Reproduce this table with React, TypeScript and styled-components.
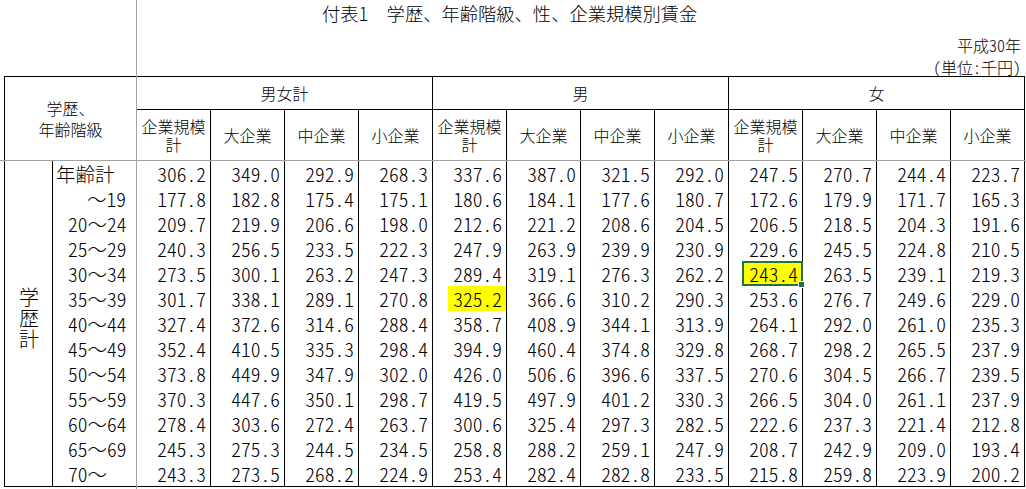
import React from "react";
import styled, { createGlobalStyle, css } from "styled-components";

const FONT = `"Noto Sans CJK JP", "Noto Sans", "DejaVu Sans", sans-serif`;

const GlobalStyle = createGlobalStyle`
  html, body { margin: 0; padding: 0; background: #fff; }
  body { font-family: ${FONT}; color: #000; }
`;

const Sheet = styled.div`
  position: relative;
  width: 1026px;
  height: 489px;
  overflow: hidden;
  background: #fff;
`;

const Heading = styled.header`
  height: 76px;
  display: flex;
  flex-direction: column;
`;

const Title = styled.h1`
  margin: 0;
  padding-left: 322px;
  height: 32px;
  font-size: 18.3px;
  font-weight: 300;
  line-height: 27px;
  white-space: nowrap;
`;

const Note = styled.div<{ $h: number }>`
  height: ${(p) => p.$h}px;
  line-height: ${(p) => p.$h}px;
  text-align: right;
  padding-right: 5px;
  font-size: 16px;
  font-weight: 300;
  white-space: nowrap;
  font-feature-settings: "hwid" 1;
`;

const Grid = styled.table`
  margin-left: 4px;
  border-collapse: collapse;
  table-layout: fixed;
  width: 1021px;
`;

const HeadRow = styled.tr<{ $h: number }>`
  height: ${(p) => p.$h}px;
`;

const DataRow = styled.tr`
  height: 25px;
`;

const headBase = css`
  padding: 0;
  font-size: 16px;
  font-weight: 300;
  text-align: center;
  vertical-align: middle;
  white-space: pre-line;
`;

const CornerCell = styled.th`
  ${headBase};
  line-height: 21px;
  border-top: 1px solid #000;
  border-left: 1px solid #000;
  border-right: 1px solid #000;
`;

const GroupCell = styled.th`
  ${headBase};
  line-height: 20px;
  border: 1px solid #000;
`;

const SubCell = styled.th`
  ${headBase};
  line-height: 18px;
  border-left: 1px solid #000;
  border-right: 1px solid #000;
  border-top: 1px solid #000;
`;

const SideCell = styled.th`
  padding: 0;
  font-size: 20px;
  font-weight: 300;
  text-align: center;
  vertical-align: middle;
  border-left: 1px solid #000;
  border-right: 1px solid #000;
  border-bottom: 1px solid #000;
`;

const VerticalText = styled.span`
  display: inline-block;
  writing-mode: vertical-rl;
  letter-spacing: 1px;
  line-height: 20px;
  margin-top: -4px;
`;

const AgeCell = styled.th<{ $indent: number; $last: boolean }>`
  padding: 0 0 0 ${(p) => p.$indent}px;
  font-size: 19.5px;
  font-weight: 300;
  line-height: 25px;
  text-align: left;
  white-space: nowrap;
  font-feature-settings: "hwid" 1;
  border-bottom: ${(p) => (p.$last ? "1px solid #000" : "none")};
`;

const Tilde = styled.span`
  font-feature-settings: normal;
`;

const NumCell = styled.td<{ $first: boolean; $last: boolean }>`
  padding: 0;
  font-size: 19.5px;
  font-weight: 300;
  text-align: right;
  white-space: nowrap;
  font-feature-settings: "hwid" 1;
  border-left: ${(p) => (p.$first ? "none" : "1px solid #000")};
  border-right: 1px solid #000;
  border-bottom: ${(p) => (p.$last ? "1px solid #000" : "none")};
`;

type Mark = "hl" | "sel" | undefined;

const Value = styled.span<{ $mark: Mark }>`
  display: block;
  height: 25px;
  line-height: 25px;
  padding-right: 4px;
  ${(p) =>
    p.$mark === "hl" &&
    css`
      margin-left: 15px;
      background: #ffff00;
    `}
  ${(p) =>
    p.$mark === "sel" &&
    css`
      position: relative;
      margin-left: 13px;
      margin-right: -1px;
      background: #ffff00;
      border: 2px solid #217346;
      box-sizing: border-box;
      line-height: 21px;
      padding-right: 3px;
      &::after {
        content: "";
        position: absolute;
        right: -4px;
        bottom: -4px;
        width: 5px;
        height: 5px;
        background: #217346;
        border: 1px solid #fff;
      }
    `}
`;

const FreezeV = styled.div`
  position: absolute;
  left: 136px;
  top: 0;
  width: 1px;
  height: 100%;
  background: #a3a3a3;
  pointer-events: none;
`;

const FreezeH = styled.div`
  position: absolute;
  left: 0;
  top: 160px;
  width: 100%;
  height: 1px;
  background: #a3a3a3;
  pointer-events: none;
`;

const groups = ["男女計", "男", "女"];
const sizes = ["企業規模\n計", "大企業", "中企業", "小企業"];

type Row = { from: string; to: string | null; indent: number; values: string[] };

const rows: Row[] = [
  { from: "年齢計", to: null, indent: 3, values: "306.2 349.0 292.9 268.3 337.6 387.0 321.5 292.0 247.5 270.7 244.4 223.7".split(" ") },
  { from: "", to: "19", indent: 34, values: "177.8 182.8 175.4 175.1 180.6 184.1 177.6 180.7 172.6 179.9 171.7 165.3".split(" ") },
  { from: "20", to: "24", indent: 15, values: "209.7 219.9 206.6 198.0 212.6 221.2 208.6 204.5 206.5 218.5 204.3 191.6".split(" ") },
  { from: "25", to: "29", indent: 15, values: "240.3 256.5 233.5 222.3 247.9 263.9 239.9 230.9 229.6 245.5 224.8 210.5".split(" ") },
  { from: "30", to: "34", indent: 15, values: "273.5 300.1 263.2 247.3 289.4 319.1 276.3 262.2 243.4 263.5 239.1 219.3".split(" ") },
  { from: "35", to: "39", indent: 15, values: "301.7 338.1 289.1 270.8 325.2 366.6 310.2 290.3 253.6 276.7 249.6 229.0".split(" ") },
  { from: "40", to: "44", indent: 15, values: "327.4 372.6 314.6 288.4 358.7 408.9 344.1 313.9 264.1 292.0 261.0 235.3".split(" ") },
  { from: "45", to: "49", indent: 15, values: "352.4 410.5 335.3 298.4 394.9 460.4 374.8 329.8 268.7 298.2 265.5 237.9".split(" ") },
  { from: "50", to: "54", indent: 15, values: "373.8 449.9 347.9 302.0 426.0 506.6 396.6 337.5 270.6 304.5 266.7 239.5".split(" ") },
  { from: "55", to: "59", indent: 15, values: "370.3 447.6 350.1 298.7 419.5 497.9 401.2 330.3 266.5 304.0 261.1 237.9".split(" ") },
  { from: "60", to: "64", indent: 15, values: "278.4 303.6 272.4 263.7 300.6 325.4 297.3 282.5 222.6 237.3 221.4 212.8".split(" ") },
  { from: "65", to: "69", indent: 15, values: "245.3 275.3 244.5 234.5 258.8 288.2 259.1 247.9 208.7 242.9 209.0 193.4".split(" ") },
  { from: "70", to: "", indent: 15, values: "243.3 273.5 268.2 224.9 253.4 282.4 282.8 233.5 215.8 259.8 223.9 200.2".split(" ") },
];

const marks: Record<string, Mark> = {
  "5-4": "hl",
  "4-8": "sel",
};

export default function App() {
  return (
    <Sheet>
      <GlobalStyle />
      <Heading>
        <Title>付表1　学歴、年齢階級、性、企業規模別賃金</Title>
        <Note $h={26}>平成30年</Note>
        <Note $h={18}>(単位:千円)</Note>
      </Heading>
      <Grid>
        <colgroup>
          <col style={{ width: 48 }} />
          <col style={{ width: 84 }} />
          {Array.from({ length: 12 }).map((_, i) => (
            <col key={i} style={{ width: 74 }} />
          ))}
        </colgroup>
        <thead>
          <HeadRow $h={33}>
            <CornerCell colSpan={2} rowSpan={2}>
              {"学歴、\n年齢階級"}
            </CornerCell>
            {groups.map((g) => (
              <GroupCell key={g} colSpan={4}>
                {g}
              </GroupCell>
            ))}
          </HeadRow>
          <HeadRow $h={51}>
            {groups.flatMap((g) =>
              sizes.map((s) => <SubCell key={g + s}>{s}</SubCell>)
            )}
          </HeadRow>
        </thead>
        <tbody>
          {rows.map((r, ri) => (
            <DataRow key={ri}>
              {ri === 0 && (
                <SideCell rowSpan={rows.length}>
                  <VerticalText>学歴計</VerticalText>
                </SideCell>
              )}
              <AgeCell $indent={r.indent} $last={ri === rows.length - 1}>
                {r.to === null ? (
                  r.from
                ) : (
                  <>
                    {r.from}
                    <Tilde>〜</Tilde>
                    {r.to}
                  </>
                )}
              </AgeCell>
              {r.values.map((v, ci) => (
                <NumCell key={ci} $first={ci === 0} $last={ri === rows.length - 1}>
                  <Value $mark={marks[`${ri}-${ci}`]}>{v}</Value>
                </NumCell>
              ))}
            </DataRow>
          ))}
        </tbody>
      </Grid>
      <FreezeV />
      <FreezeH />
    </Sheet>
  );
}
